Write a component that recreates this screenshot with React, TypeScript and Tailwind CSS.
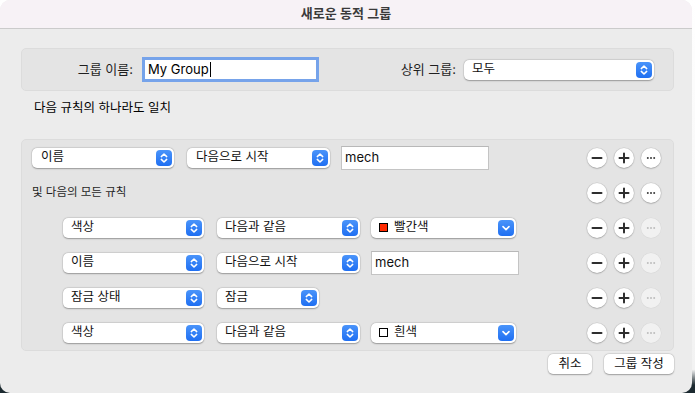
import React from "react";

const font = { fontFamily: 'Inter, "Noto Sans CJK KR", sans-serif' };

function Stepper() {
  return (
    <svg width="16" height="16" viewBox="0 0 16 16" className="shrink-0">
      <defs>
        <linearGradient id="stepBlue" x1="0" y1="0" x2="0" y2="1">
          <stop offset="0" stopColor="#4a94fa" />
          <stop offset="1" stopColor="#1f6ff2" />
        </linearGradient>
      </defs>
      <rect x="0" y="0" width="16" height="16" rx="4" fill="url(#stepBlue)" />
      <path d="M5.3 6.6 L8 4 L10.7 6.6" fill="none" stroke="white" strokeWidth="1.5" strokeLinecap="round" strokeLinejoin="round" />
      <path d="M5.3 9.4 L8 12 L10.7 9.4" fill="none" stroke="white" strokeWidth="1.5" strokeLinecap="round" strokeLinejoin="round" />
    </svg>
  );
}

function DownButton() {
  return (
    <svg width="16" height="16" viewBox="0 0 16 16" className="shrink-0">
      <rect x="0" y="0" width="16" height="16" rx="4" fill="url(#stepBlue)" />
      <path d="M5 6.6 L8 9.6 L11 6.6" fill="none" stroke="white" strokeWidth="1.6" strokeLinecap="round" strokeLinejoin="round" />
    </svg>
  );
}

type SelectProps = {
  label: string;
  width: string;
  swatch?: string;
  pull?: boolean;
  pad?: string;
};

function Select({ label, width, swatch, pull, pad = "pl-[9px]" }: SelectProps) {
  return (
    <div
      className={`${width} flex h-[20px] shrink-0 items-center justify-between rounded-[5px] bg-white ${pad} pr-[2px] text-[12.5px] text-[#111] shadow-[0_0.5px_1.5px_rgba(0,0,0,0.3),0_0_0_0.5px_rgba(0,0,0,0.08)]`}
    >
      <span className="flex items-center gap-[6px] leading-none">
        {swatch ? (
          <span className="h-[9px] w-[9px] border border-black" style={{ background: swatch }} />
        ) : null}
        {label}
      </span>
      {pull ? <DownButton /> : <Stepper />}
    </div>
  );
}

function TextField({ value, width }: { value: string; width: string }) {
  return (
    <div
      className={`${width} flex h-[24px] shrink-0 items-center border border-[#c4c4c4] border-t-[#b8b8b8] bg-white pl-[3px] text-[13px] text-[#111]`}
    >
      {value}
    </div>
  );
}

function RoundButton({ kind, disabled }: { kind: "minus" | "plus" | "more"; disabled?: boolean }) {
  return (
    <div
      className={`flex h-[20px] w-[20px] items-center justify-center rounded-full ${
        disabled
          ? "bg-[#f1f1f1] shadow-[0_0_0_0.5px_rgba(0,0,0,0.05)]"
          : "bg-white shadow-[0_0.5px_1.5px_rgba(0,0,0,0.3),0_0_0_0.5px_rgba(0,0,0,0.08)]"
      }`}
    >
      <svg width="12" height="12" viewBox="0 0 12 12">
        {kind === "minus" ? (
          <path d="M1.5 6 H10.5" stroke="#2e2e2e" strokeWidth="2" strokeLinecap="round" />
        ) : null}
        {kind === "plus" ? (
          <path d="M1.5 6 H10.5 M6 1.5 V10.5" stroke="#2e2e2e" strokeWidth="2" strokeLinecap="round" />
        ) : null}
        {kind === "more" ? (
          <g fill={disabled ? "#bdbdbd" : "#3a3a3a"}>
            <circle cx="2.8" cy="6" r="1" />
            <circle cx="6" cy="6" r="1" />
            <circle cx="9.2" cy="6" r="1" />
          </g>
        ) : null}
      </svg>
    </div>
  );
}

function Actions({ moreDisabled }: { moreDisabled?: boolean }) {
  return (
    <div className="ml-auto flex items-center gap-[7px] pr-[12px]">
      <RoundButton kind="minus" />
      <RoundButton kind="plus" />
      <RoundButton kind="more" disabled={moreDisabled} />
    </div>
  );
}

export default function App() {
  return (
    <div
      className="h-[393px] w-[695px] overflow-hidden bg-[linear-gradient(to_bottom,#ffffff_0%,#f2f2f2_94%,#1c2a30_98%)]"
      style={font}
    >
      <div className="flex h-[393px] w-[692px] flex-col overflow-hidden rounded-[10px] bg-[#ececec]">
        <div className="flex h-[29px] shrink-0 items-center justify-center border-b border-[#cbcbcb] bg-[#f7f2f6] text-[13px] font-semibold text-[#3a3a3a]">
          새로운 동적 그룹
        </div>

        <div className="flex flex-col pl-[21px] pr-[18px] pt-[19px]">
          <div className="flex h-[43px] items-center rounded-[5px] border border-[#dcdcdc] bg-[#e4e4e4] text-[13px] text-[#1f1f1f]">
            <div className="w-[111px] text-right">그룹 이름:</div>
            <div className="ml-[12px] flex h-[19px] w-[171px] items-center bg-white pl-[3px] text-[13px] text-black ring-[3px] ring-[#76a3ea]">
              My Group
              <span className="ml-[1px] h-[15px] w-[1px] bg-black" />
            </div>
            <div className="w-[140px] text-right">상위 그룹:</div>
            <div className="ml-[8px]">
              <Select label="모두" width="w-[190px]" pad="pl-[8px]" />
            </div>
          </div>

          <div className="h-[48px] pl-[13px] pt-[9px] text-[12.5px] leading-[16px] text-black">
            다음 규칙의 하나라도 일치
          </div>

          <div className="flex flex-col rounded-[5px] border border-[#dcdcdc] bg-[#e4e4e4]">
            <div className="flex h-[35px] items-center pl-[10px]">
              <Select label="이름" width="w-[142px]" />
              <div className="ml-[13px]">
                <Select label="다음으로 시작" width="w-[143px]" />
              </div>
              <div className="ml-[11px]">
                <TextField value="mech" width="w-[148px]" />
              </div>
              <Actions />
            </div>

            <div className="flex h-[35px] items-center pl-[10px]">
              <span className="text-[11.5px] text-[#1f1f1f]">및 다음의 모든 규칙</span>
              <Actions />
            </div>

            <div className="flex h-[35px] items-center pl-[41px]">
              <Select label="색상" width="w-[141px]" pad="pl-[8px]" />
              <div className="ml-[13px]">
                <Select label="다음과 같음" width="w-[143px]" pad="pl-[8px]" />
              </div>
              <div className="ml-[11px]">
                <Select label="빨간색" width="w-[145px]" swatch="#ff2a00" pull pad="pl-[8px]" />
              </div>
              <Actions moreDisabled />
            </div>

            <div className="flex h-[35px] items-center pl-[41px]">
              <Select label="이름" width="w-[141px]" pad="pl-[8px]" />
              <div className="ml-[13px]">
                <Select label="다음으로 시작" width="w-[143px]" pad="pl-[8px]" />
              </div>
              <div className="ml-[11px]">
                <TextField value="mech" width="w-[148px]" />
              </div>
              <Actions moreDisabled />
            </div>

            <div className="flex h-[35px] items-center pl-[41px]">
              <Select label="잠금 상태" width="w-[141px]" pad="pl-[8px]" />
              <div className="ml-[13px]">
                <Select label="잠금" width="w-[102px]" pad="pl-[8px]" />
              </div>
              <Actions moreDisabled />
            </div>

            <div className="flex h-[35px] items-center pl-[41px]">
              <Select label="색상" width="w-[141px]" pad="pl-[8px]" />
              <div className="ml-[13px]">
                <Select label="다음과 같음" width="w-[143px]" pad="pl-[8px]" />
              </div>
              <div className="ml-[11px]">
                <Select label="흰색" width="w-[145px]" swatch="#ffffff" pull pad="pl-[8px]" />
              </div>
              <Actions moreDisabled />
            </div>
          </div>

          <div className="mt-[3px] flex justify-end gap-[12px]">
            <div className="flex h-[20px] w-[44px] items-center justify-center rounded-[5px] bg-white text-[12.5px] text-[#111] shadow-[0_0.5px_1.5px_rgba(0,0,0,0.3),0_0_0_0.5px_rgba(0,0,0,0.08)]">
              취소
            </div>
            <div className="flex h-[20px] w-[70px] items-center justify-center rounded-[5px] bg-white text-[12.5px] text-[#111] shadow-[0_0.5px_1.5px_rgba(0,0,0,0.3),0_0_0_0.5px_rgba(0,0,0,0.08)]">
              그룹 작성
            </div>
          </div>
        </div>
      </div>
    </div>
  );
}
